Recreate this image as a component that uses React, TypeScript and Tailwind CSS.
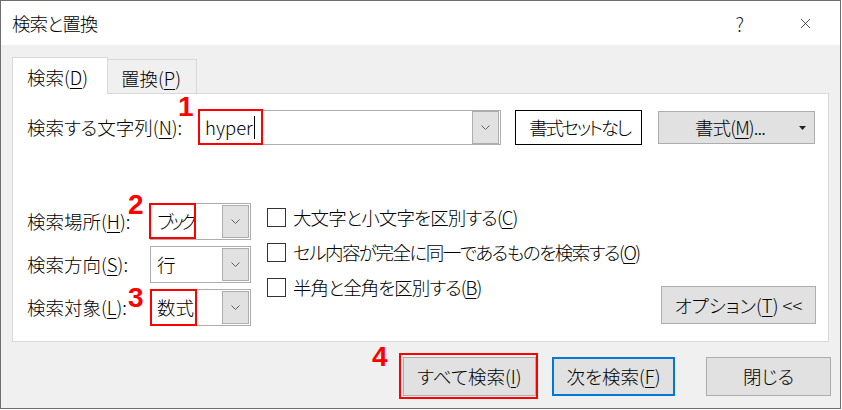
import { X } from 'lucide-react';

function U({ c }: { c: string }) {
  return <span className="underline decoration-1 underline-offset-[3px]">{c}</span>;
}

function Chevron() {
  return (
    <svg width="9" height="5" viewBox="0 0 9 5" fill="none">
      <path d="M0.5 0.5 L4.5 4.5 L8.5 0.5" stroke="#606060" strokeWidth="1" />
    </svg>
  );
}

function DropButton({ h }: { h: string }) {
  return (
    <div className={`mr-px flex w-[27px] ${h} items-center justify-center border border-[#adadad] bg-[#e1e1e1]`}>
      <Chevron />
    </div>
  );
}

const selects = [
  { label: '検索場所(', key: 'H', value: 'ブック', tr: 'tracking-[-4px]' },
  { label: '検索方向(', key: 'S', value: '行', tr: '' },
  { label: '検索対象(', key: 'L', value: '数式', tr: '' },
];

const checks = [
  { text: '大文字と小文字を区別する(', key: 'C', tr: 'tracking-[-0.9px]' },
  { text: 'セル内容が完全に同一であるものを検索する(', key: 'O', tr: 'tracking-[-1.5px]' },
  { text: '半角と全角を区別する(', key: 'B', tr: 'tracking-[-1px]' },
];

const redNum = "absolute font-['Liberation_Sans',Arial,sans-serif] text-[28px] font-bold leading-none text-[#ff0000]";

export default function App() {
  return (
    <div className="h-[410px] w-[842px] bg-white">
      <div className="relative flex h-[409px] w-[841px] flex-col border border-[#6e6e6e] bg-[#f0f0f0] font-['Noto_Sans_CJK_JP','Noto_Sans',sans-serif] text-[18.5px] font-light leading-none text-black [font-feature-settings:'palt']">
        {/* title bar */}
        <div className="flex h-[44px] shrink-0 items-center bg-white pl-[11px]">
          <span className="tracking-[-1px]">検索と置換</span>
          <span className="ml-auto text-[19px] font-light text-[#222]">?</span>
          <X className="ml-[53px] mr-[26px] h-[17px] w-[17px] text-[#222]" strokeWidth={1.1} />
        </div>

        {/* tabs */}
        <div className="ml-[11px] mt-[12px] flex h-[36px] items-start">
          <div className="relative z-10 flex h-[37px] w-[96px] items-center border border-b-0 border-[#d9d9d9] bg-white pl-[14px] pt-[3px]">
            検索(<U c="D" />)
          </div>
          <div className="mt-[2px] flex h-[34px] w-[89px] items-center border-r border-t border-[#d9d9d9] bg-[#f0f0f0] pl-[13px] pt-[3px]">
            置換(<U c="P" />)
          </div>
        </div>

        {/* panel */}
        <div className="ml-[11px] flex h-[249px] w-[817px] flex-col border border-[#d9d9d9] bg-white">
          <div className="ml-[14px] mt-[16px] flex h-[35px] items-center">
            <span className="w-[171px] whitespace-nowrap">
              検索する文字列(<U c="N" />):
            </span>
            <div className="flex h-[35px] w-[303px] items-center border border-[#adadad] bg-white">
              <div className="flex flex-1 items-center pl-[6px]">
                hyper
                <span className="ml-px h-[23px] w-px bg-black" />
              </div>
              <DropButton h="h-[33px]" />
            </div>
            <div className="ml-[14px] flex h-[35px] w-[127px] items-center justify-center whitespace-nowrap border border-black bg-white pl-[2px] tracking-[-2.4px]">
              書式セットなし
            </div>
            <div className="ml-[16px] flex h-[33px] w-[157px] items-center whitespace-nowrap border border-[#adadad] bg-[#e1e1e1] pl-[36px] pr-[8px] tracking-[-0.9px]">
              書式(<U c="M" />)...
              <svg className="ml-auto" width="7" height="4" viewBox="0 0 7 4">
                <path d="M0 0 H7 L3.5 4 Z" fill="#222" />
              </svg>
            </div>
          </div>

          <div className="ml-[14px] mr-[12px] mt-[58px] flex">
            <div className="flex flex-col gap-[6px]">
              {selects.map((s) => (
                <div key={s.key} className="flex h-[37px] items-center">
                  <span className="w-[123px] whitespace-nowrap">
                    {s.label}
                    <U c={s.key} />):
                  </span>
                  <div className="flex h-[37px] w-[101px] items-center border border-[#adadad] bg-white">
                    <span className={`flex-1 whitespace-nowrap pl-[6px] ${s.tr}`}>{s.value}</span>
                    <DropButton h="h-[33px]" />
                  </div>
                </div>
              ))}
            </div>

            <div className="ml-[16px] flex flex-col gap-[16px] pt-[5px]">
              {checks.map((c) => (
                <div key={c.key} className="flex h-[19px] items-center gap-[7px]">
                  <div className="h-[19px] w-[19px] shrink-0 border border-[#333] bg-white" />
                  <span className={`whitespace-nowrap ${c.tr}`}>
                    {c.text}
                    <U c={c.key} />)
                  </span>
                </div>
              ))}
            </div>

            <div className="mb-[2px] ml-auto flex h-[38px] w-[155px] items-center justify-center self-end whitespace-nowrap border border-[#adadad] bg-[#e1e1e1]">
              オプション(<U c="T" />) &lt;&lt;
            </div>
          </div>
        </div>

        {/* bottom buttons */}
        <div className="mt-[15px] flex justify-end pr-[9px]">
          <div className="flex h-[39px] w-[133px] items-center justify-center whitespace-nowrap border border-[#adadad] bg-[#e1e1e1]">
            すべて検索(<U c="I" />)
          </div>
          <div className="ml-[16px] flex h-[39px] w-[123px] items-center justify-center whitespace-nowrap border-2 border-[#0078d7] bg-[#e1e1e1]">
            次を検索(<U c="F" />)
          </div>
          <div className="ml-[31px] flex h-[39px] w-[125px] items-center justify-center whitespace-nowrap border border-[#adadad] bg-[#e1e1e1]">
            閉じる
          </div>
        </div>

        {/* red annotations */}
        <div className="absolute left-[197px] top-[108px] h-[36px] w-[65px] border-2 border-[#ff0000]" />
        <div className="absolute left-[148px] top-[202px] h-[36px] w-[47px] border-2 border-[#ff0000]" />
        <div className="absolute left-[149px] top-[288px] h-[37px] w-[47px] border-2 border-[#ff0000]" />
        <div className="absolute left-[398px] top-[352px] h-[46px] w-[139px] border-2 border-[#ff0000]" />
        <span className={`${redNum} left-[177px] top-[92px]`}>1</span>
        <span className={`${redNum} left-[127px] top-[190px]`}>2</span>
        <span className={`${redNum} left-[127px] top-[283px]`}>3</span>
        <span className={`${redNum} left-[371px] top-[342px]`}>4</span>
      </div>
    </div>
  );
}
